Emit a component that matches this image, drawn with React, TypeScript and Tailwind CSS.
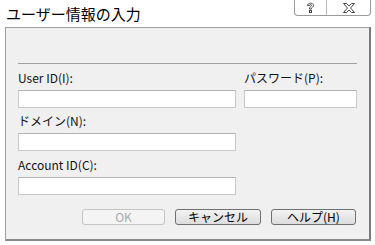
import React from "react";

const font = { fontFamily: '"Noto Sans CJK JP", "Liberation Sans", sans-serif' };

function Field({ label, className = "" }: { label: string; className?: string }) {
  return (
    <div className={className}>
      <div className="h-[20px] text-[12px] leading-[20px] text-[#111]">{label}</div>
      <div className="mt-[2px] h-[18px] border border-[#c9c9c9] border-t-[#b3b3b3] bg-white"></div>
    </div>
  );
}

export default function App() {
  return (
    <div className="w-[375px] h-[245px] bg-white overflow-hidden" style={font}>
      {/* title bar */}
      <div className="flex h-[27px] items-start justify-between">
        <div className="pl-[6px] pt-[5px] text-[15px] leading-[18px] text-black">ユーザー情報の入力</div>
        <div className="mr-[4px] flex h-[16px] rounded-b-[4px] border border-t-0 border-[#9a9a9a] bg-white">
          <div className="flex w-[32px] items-center justify-center border-r border-[#b8b8b8]">
            <svg width="9" height="11" viewBox="0 0 9 11" fill="none" stroke="#444" strokeWidth="1">
              <path d="M1.5 3.5 C1.5 0.5 7.5 0.5 7.5 3.5 C7.5 5 5.5 5.3 5.5 6.5 L5.5 7 L3.5 7 L3.5 6 C3.5 4.8 5.5 4.5 5.5 3.5 C5.5 2.3 3.5 2.3 3.5 3.5 Z" />
              <rect x="3.5" y="8.5" width="2" height="2" />
            </svg>
          </div>
          <div className="flex w-[43px] items-center justify-center">
            <svg width="12" height="10" viewBox="0 0 12 10" fill="none" stroke="#444" strokeWidth="1">
              <path d="M0.5 0.5 L3.5 0.5 L6 3 L8.5 0.5 L11.5 0.5 L7.5 5 L11.5 9.5 L8.5 9.5 L6 7 L3.5 9.5 L0.5 9.5 L4.5 5 Z" />
            </svg>
          </div>
        </div>
      </div>

      {/* dialog body */}
      <div className="ml-[5px] h-[214px] w-[366px] border border-[#a0a0a0] border-r-2 border-r-[#7a7a7a] border-b-2 border-b-[#8a8a8a] bg-[#f0f0f0] px-[12px]">
        <div className="mt-[35px] h-px bg-[#a0a0a0]"></div>

        <div className="mt-[4px] grid grid-cols-[218px_113px] gap-x-[8px]">
          <Field label="User ID(I):" />
          <Field label="パスワード(P):" />
        </div>
        <Field label="ドメイン(N):" className="mt-[3px] w-[218px]" />
        <Field label="Account ID(C):" className="mt-[4px] w-[218px]" />

        <div className="mt-[14px] flex justify-end gap-[10px] pr-[1px]">
          <div className="flex h-[16px] w-[83px] items-center justify-center rounded-[3px] border border-[#c4c4c4] bg-[#f4f4f4] text-[12px] text-[#a8a8a8]">
            OK
          </div>
          <div className="flex h-[16px] w-[86px] items-center justify-center rounded-[3px] border border-[#707070] bg-gradient-to-b from-[#f3f3f3] to-[#dcdcdc] text-[12px] text-black">
            キャンセル
          </div>
          <div className="flex h-[16px] w-[85px] items-center justify-center rounded-[3px] border border-[#707070] bg-gradient-to-b from-[#f3f3f3] to-[#dcdcdc] text-[12px] text-black">
            ヘルプ(H)
          </div>
        </div>
      </div>
    </div>
  );
}
